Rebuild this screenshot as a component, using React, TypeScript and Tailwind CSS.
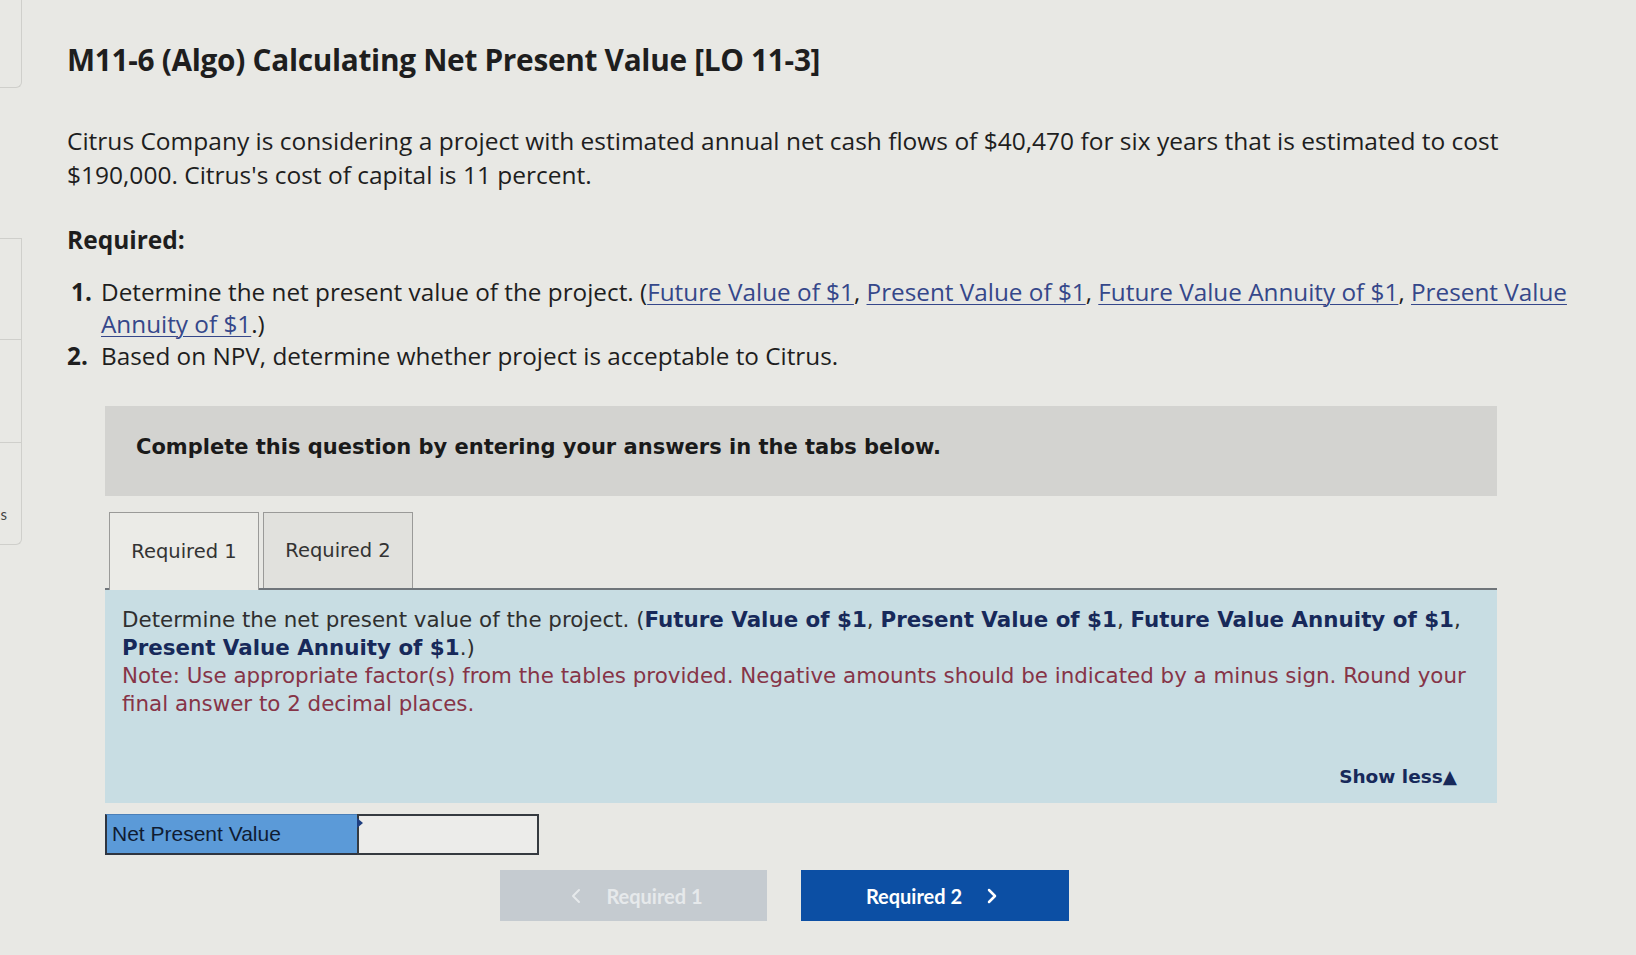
import { ChevronLeft, ChevronRight } from "lucide-react";

const sans = "font-['Open_Sans','Lato',sans-serif]";
const verdana = "font-['DejaVu_Sans','Verdana',sans-serif]";

function SideStrip() {
  return (
    <div className="w-[22px] shrink-0 flex flex-col text-[#444]">
      <div className="h-[88px] border-r border-b border-[#cfcfcb] rounded-br-md" />
      <div className="h-[150px]" />
      <div className="h-[102px] border-r border-y border-[#cfcfcb]" />
      <div className="h-[103px] border-r border-b border-[#cfcfcb]" />
      <div className="h-[102px] border-r border-b border-[#cfcfcb] rounded-br-md relative">
        <span className="absolute right-[14px] top-[60px] text-[15px] font-['Lato',sans-serif]">s</span>
      </div>
    </div>
  );
}

function Link({ children }: { children: React.ReactNode }) {
  return <span className="text-[#35478a] underline underline-offset-[3px] decoration-1">{children}</span>;
}

export default function App() {
  return (
    <div className="min-h-screen bg-[#e8e8e4] flex overflow-hidden">
      <SideStrip />
      <main className={`pl-[45px] pr-[100px] flex-1 text-[#1e1e1e] ${sans}`}>
        <h1 className="pt-[42px] text-[29.8px] leading-[36px] font-bold tracking-[-0.3px] whitespace-nowrap">
          M11-6 (Algo) Calculating Net Present Value [LO 11-3]
        </h1>

        <p className="mt-[46px] text-[24.5px] leading-[34px] whitespace-nowrap">
          Citrus Company is considering a project with estimated annual net cash flows of $40,470 for six years that is estimated to cost
          <br />
          $190,000. Citrus's cost of capital is 11 percent.
        </p>

        <p className="mt-[31px] text-[24.5px] leading-[34px] font-bold">Required:</p>

        <ol className="mt-[19px] text-[24.3px] leading-[32px] whitespace-nowrap">
          <li className="flex">
            <span className="w-[34px] shrink-0 font-bold pl-[4px]">1.</span>
            <span>
              Determine the net present value of the project. (<Link>Future Value of $1</Link>, <Link>Present Value of $1</Link>, <Link>Future Value Annuity of $1</Link>, <Link>Present Value</Link>
              <br />
              <Link>Annuity of $1</Link>.)
            </span>
          </li>
          <li className="flex">
            <span className="w-[34px] shrink-0 font-bold">2.</span>
            <span>Based on NPV, determine whether project is acceptable to Citrus.</span>
          </li>
        </ol>

        <section className="mt-[34px] ml-[38px] w-[1392px]">
          <div className={`h-[90px] bg-[#d3d3d0] pl-[31px] pt-[26px] text-[21px] font-bold text-[#1a1a1a] ${verdana}`}>
            Complete this question by entering your answers in the tabs below.
          </div>

          <div className={`mt-[14px] flex items-end gap-[4px] pl-[4px] ${verdana} text-[19.5px] text-[#333]`}>
            <div className="w-[150px] h-[78px] border border-b-0 border-[#9a9a98] bg-[#ebebe7] flex items-center justify-center relative top-[2px]">
              Required 1
            </div>
            <div className="w-[150px] h-[76px] border border-b-0 border-[#9a9a98] bg-[#e1e1dd] flex items-center justify-center">
              Required 2
            </div>
          </div>

          <div className={`border-t-2 border-[#6f757a] bg-[#c8dde3] h-[215px] pl-[17px] pr-[16px] pt-[16px] flex flex-col ${verdana} text-[21.4px] leading-[28px] text-[#2f2f2f]`}>
            <p>
              Determine the net present value of the project. (
              <b className="text-[#17295a]">Future Value of $1</b>, <b className="text-[#17295a]">Present Value of $1</b>, <b className="text-[#17295a]">Future Value Annuity of $1</b>, <b className="text-[#17295a]">Present Value Annuity of $1</b>.)
            </p>
            <p className="text-[#863447]">
              Note: Use appropriate factor(s) from the tables provided. Negative amounts should be indicated by a minus sign. Round your final answer to 2 decimal places.
            </p>
            <div className="mt-auto mb-[12px] mr-[24px] self-end text-[18.5px] font-bold text-[#17295a]">
              Show less▲
            </div>
          </div>

          <div className="mt-[11px] flex h-[41px] w-[434px]">
            <div className="w-[252px] bg-[#5b9ad8] border-b-2 border-l-2 border-[#2f3540] border-t border-t-[#4a7fb8] pl-[5px] flex items-center text-[21px] text-[#0f1c33] font-['Liberation_Sans',Arial,sans-serif]">
              Net Present Value
            </div>
            <div className="flex-1 border-2 border-[#353a40] bg-[#ececea] relative">
              <span className="absolute left-[-2px] top-[2px] w-0 h-0 border-t-[5px] border-b-[5px] border-l-[6px] border-t-transparent border-b-transparent border-l-[#1f3f80]" />
            </div>
          </div>

          <div className="mt-[15px] flex gap-[34px] pl-[395px] font-['Lato',sans-serif]">
            <button className="w-[267px] h-[51px] bg-[#c5cbd0] text-[#e6e9eb] flex items-center justify-center gap-[18px] text-[20px] font-bold">
              <ChevronLeft size={24} strokeWidth={2} />
              <span>Required 1</span>
            </button>
            <button className="w-[268px] h-[51px] bg-[#0c4fa4] text-white flex items-center justify-center gap-[18px] text-[20px] font-bold">
              <span>Required 2</span>
              <ChevronRight size={24} strokeWidth={2.5} />
            </button>
          </div>
        </section>
      </main>
    </div>
  );
}
